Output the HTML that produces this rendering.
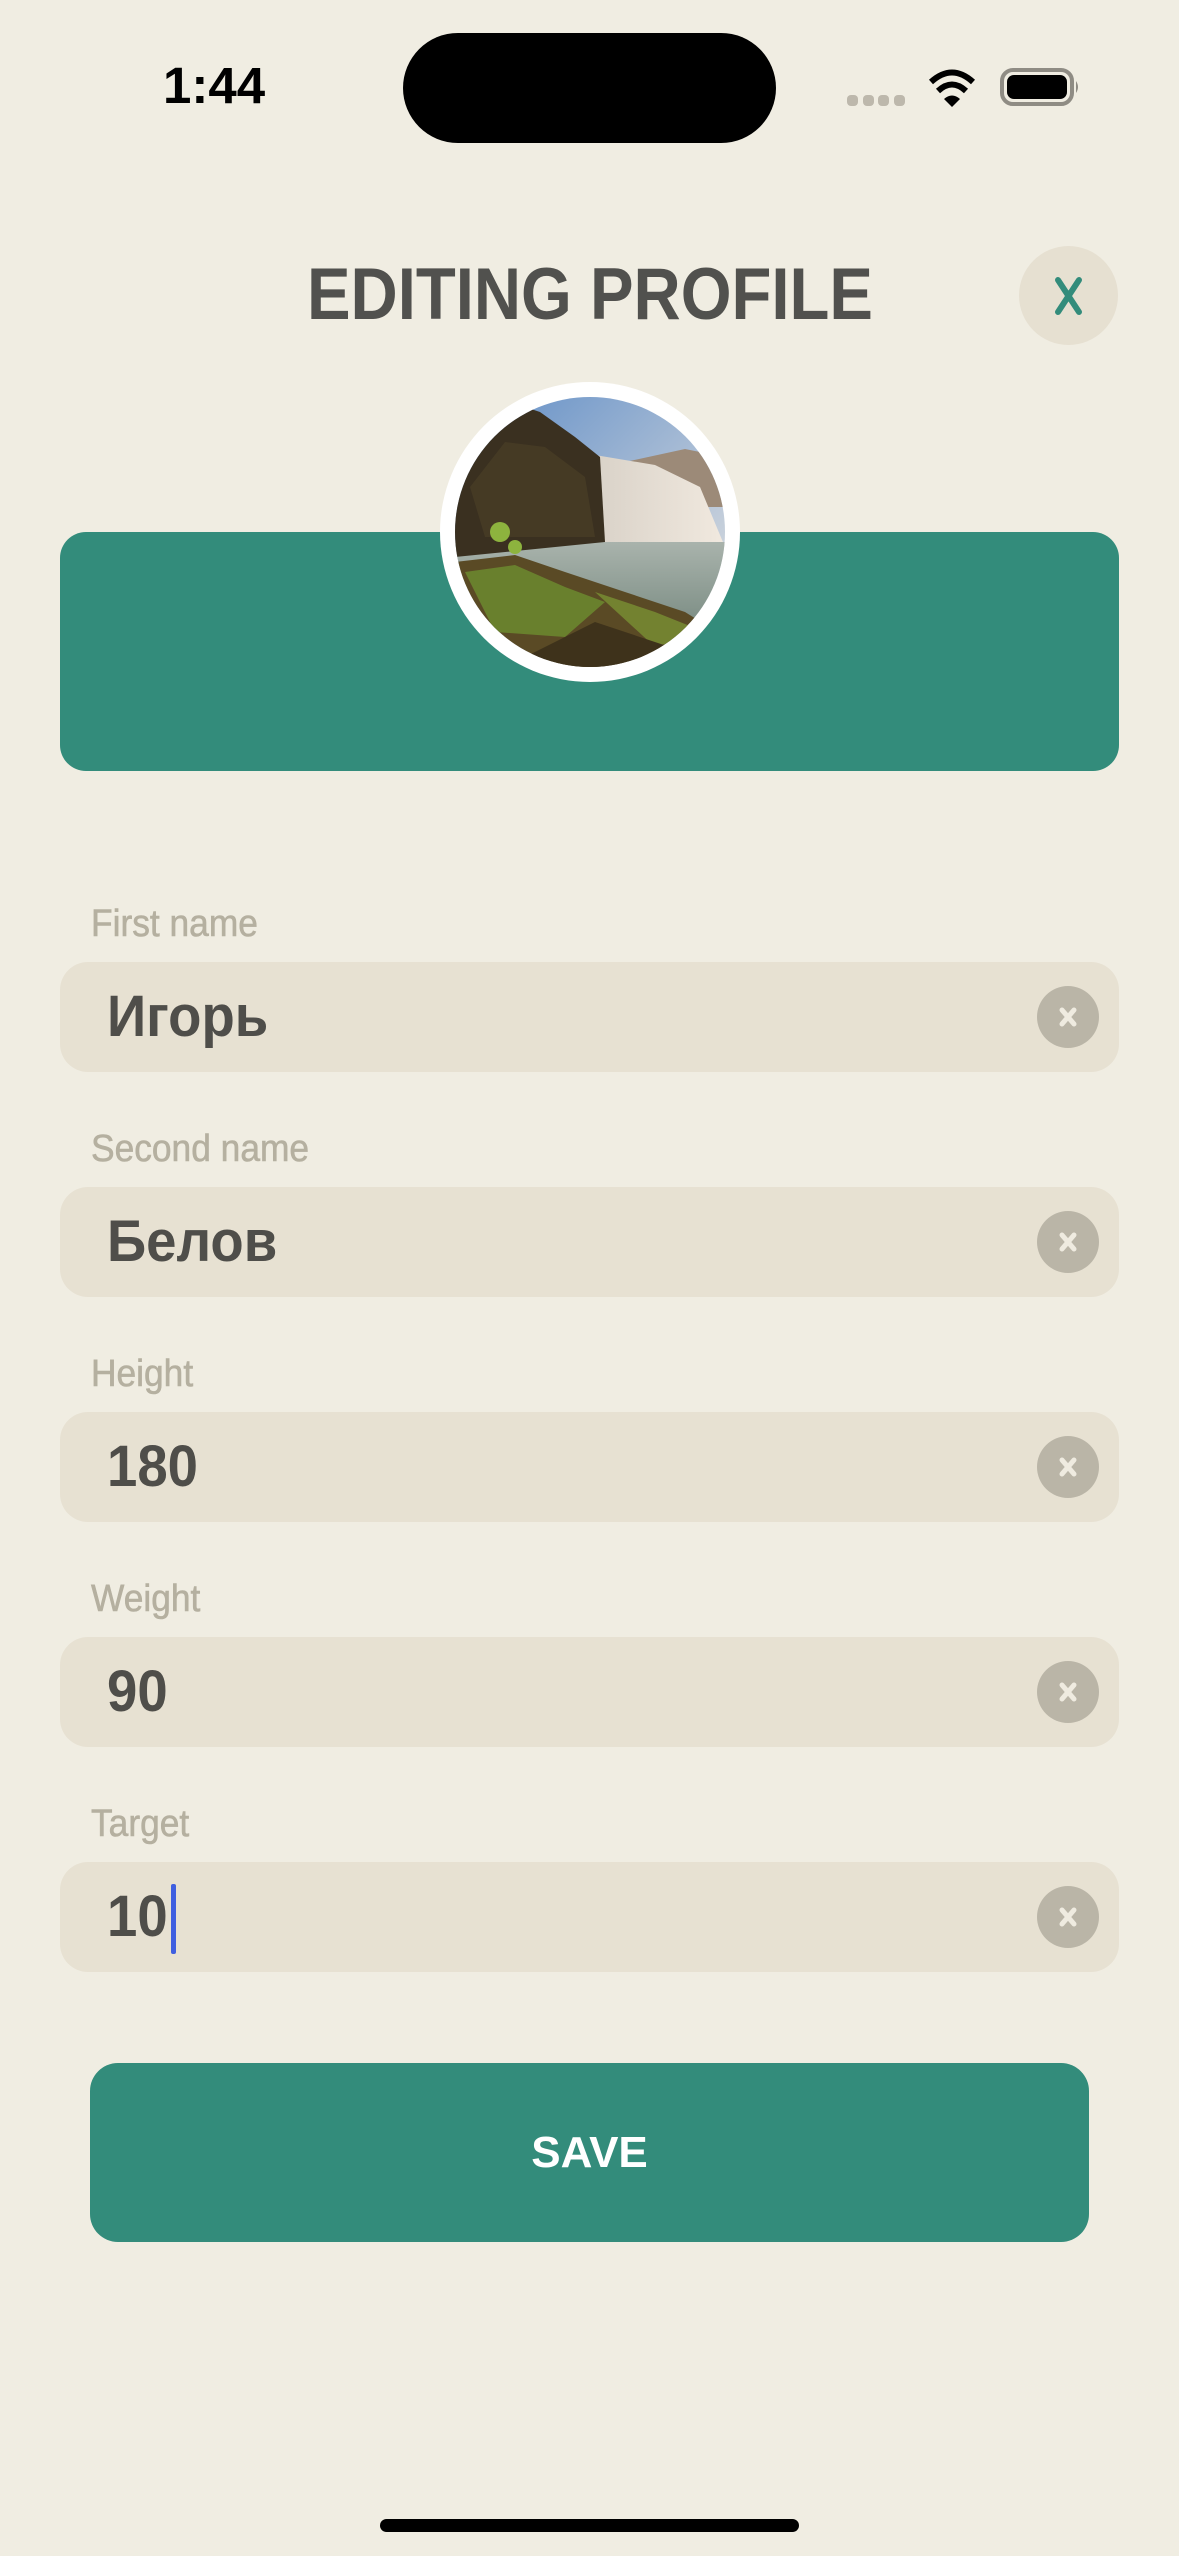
<!DOCTYPE html>
<html><head><meta charset="utf-8"><style>
html,body{margin:0;padding:0}
body{width:1179px;height:2556px;background:#F0EDE2;position:relative;overflow:hidden;font-family:"Liberation Sans",sans-serif}
.abs{position:absolute}
.lbl{position:absolute;left:91px;font-size:38px;color:#B5B0A0;transform:scaleX(0.93);transform-origin:left center;line-height:1;-webkit-text-stroke:0.6px #B5B0A0}
.fld{position:absolute;left:60px;width:1059px;height:110px;background:#E7E1D2;border-radius:28px}
.val{position:absolute;left:47px;top:0;line-height:110px;font-size:58px;font-weight:bold;color:#4F4E4A;transform:scaleX(0.94);transform-origin:left center}
.clr{position:absolute;left:977px;top:24px;width:62px;height:62px;border-radius:50%;background:#BAB5A7}
</style></head><body>
<div class="abs" style="left:163px;top:56px;font-size:51px;font-weight:bold;color:#000">1:44</div>
<div class="abs" style="left:403px;top:33px;width:373px;height:110px;border-radius:55px;background:#000"></div>
<svg class="abs" style="left:840px;top:60px" width="250" height="60">
<g fill="#BDB8AC"><rect x="7" y="35" width="11" height="11" rx="4"/><rect x="23" y="35" width="11" height="11" rx="4"/><rect x="38" y="35" width="11" height="11" rx="4"/><rect x="54" y="35" width="11" height="11" rx="4"/></g>
<g fill="none" stroke="#000" stroke-width="6"><path d="M91 22 Q112 3 133 22"/><path d="M98 31 Q112 18 126 31"/></g>
<path d="M104 39 Q112 32 120 39 L112 47Z" fill="#000"/>
<rect x="162" y="10" width="70" height="34" rx="11" fill="none" stroke="#8F8C84" stroke-width="4"/>
<rect x="167" y="15" width="60" height="24" rx="7" fill="#000"/>
<path d="M236 21 Q240 27 236 33Z" fill="#8F8C84"/>
</svg>
<svg class="abs" style="left:300px;top:255px" width="580" height="75"><text x="7" y="64" textLength="566" lengthAdjust="spacingAndGlyphs" font-family="Liberation Sans" font-weight="bold" font-size="73" fill="#51514E">EDITING PROFILE</text></svg>
<div class="abs" style="left:1019px;top:246px;width:99px;height:99px;border-radius:50%;background:#E6E0D1"></div>
<svg class="abs" style="left:1019px;top:246px" width="99" height="99"><path d="M39 34 L60 66 M60 34 L39 66" stroke="#338C7B" stroke-width="6" stroke-linecap="round"/></svg>
<div class="abs" style="left:60px;top:532px;width:1059px;height:239px;background:#338C7B;border-radius:26px"></div>
<div class="abs" style="left:440px;top:382px;width:300px;height:300px;border-radius:50%;background:#fff"></div>
<svg class="abs" style="left:455px;top:397px" width="270" height="270">
<defs><clipPath id="c"><circle cx="135" cy="135" r="135"/></clipPath>
<linearGradient id="sky" x1="0" y1="0" x2="1" y2="1"><stop offset="0" stop-color="#5E8CC6"/><stop offset="1" stop-color="#E9E6E2"/></linearGradient>
<linearGradient id="wf" x1="0" y1="0" x2="1" y2="0"><stop offset="0" stop-color="#D9D2C8"/><stop offset="1" stop-color="#F1E9DF"/></linearGradient>
<linearGradient id="wat" x1="0" y1="0" x2="0" y2="1"><stop offset="0" stop-color="#A9B3AC"/><stop offset="1" stop-color="#7E8F86"/></linearGradient></defs>
<g clip-path="url(#c)">
<rect width="270" height="270" fill="url(#sky)"/>
<path d="M170 65 L230 52 L270 60 L270 110 L170 110Z" fill="#9C8A78"/>
<path d="M140 58 L200 68 L245 90 L270 150 L150 150Z" fill="url(#wf)"/>
<rect x="0" y="145" width="270" height="80" fill="url(#wat)"/>
<path d="M0 60 L30 20 L55 5 L85 15 L120 40 L145 60 L150 145 L0 160Z" fill="#3A3020"/>
<path d="M15 90 L50 45 L90 50 L130 80 L140 140 L30 140Z" fill="#4A3F26" opacity="0.7"/>
<path d="M0 165 L60 158 L110 175 L170 195 L230 215 L270 240 L270 270 L0 270Z" fill="#5A4A25"/>
<path d="M10 175 L60 168 L110 190 L150 205 L110 240 L40 235Z" fill="#6C8A2F" opacity="0.85"/>
<path d="M140 195 L200 215 L250 235 L200 250Z" fill="#7E9A35" opacity="0.7"/>
<path d="M50 270 L140 225 L230 255 L230 270Z" fill="#3E321B"/>
<circle cx="45" cy="135" r="10" fill="#8DB33E"/><circle cx="60" cy="150" r="7" fill="#8DB33E"/>
</g></svg>

<div class="lbl" style="top:905px">First name</div>
<div class="fld" style="top:962px"><div class="val">Игорь</div><div class="clr"></div><svg class="abs" style="left:977px;top:24px" width="62" height="62"><path d="M25 24 L37 38 M37 24 L25 38" stroke="#EFEBE0" stroke-width="5" stroke-linecap="round"/></svg></div>
<div class="lbl" style="top:1130px">Second name</div>
<div class="fld" style="top:1187px"><div class="val">Белов</div><div class="clr"></div><svg class="abs" style="left:977px;top:24px" width="62" height="62"><path d="M25 24 L37 38 M37 24 L25 38" stroke="#EFEBE0" stroke-width="5" stroke-linecap="round"/></svg></div>
<div class="lbl" style="top:1355px">Height</div>
<div class="fld" style="top:1412px"><div class="val">180</div><div class="clr"></div><svg class="abs" style="left:977px;top:24px" width="62" height="62"><path d="M25 24 L37 38 M37 24 L25 38" stroke="#EFEBE0" stroke-width="5" stroke-linecap="round"/></svg></div>
<div class="lbl" style="top:1580px">Weight</div>
<div class="fld" style="top:1637px"><div class="val">90</div><div class="clr"></div><svg class="abs" style="left:977px;top:24px" width="62" height="62"><path d="M25 24 L37 38 M37 24 L25 38" stroke="#EFEBE0" stroke-width="5" stroke-linecap="round"/></svg></div>
<div class="lbl" style="top:1805px">Target</div>
<div class="fld" style="top:1862px"><div class="val">10</div><div class="abs" style="left:111px;top:22px;width:5px;height:70px;background:#3F5FE0;border-radius:2px"></div><div class="clr"></div><svg class="abs" style="left:977px;top:24px" width="62" height="62"><path d="M25 24 L37 38 M37 24 L25 38" stroke="#EFEBE0" stroke-width="5" stroke-linecap="round"/></svg></div>

<div class="abs" style="left:90px;top:2063px;width:999px;height:179px;background:#338C7B;border-radius:28px;color:#fff;font-weight:bold;font-size:44px;text-align:center;line-height:179px">SAVE</div>
<div class="abs" style="left:380px;top:2519px;width:419px;height:13px;background:#000;border-radius:7px"></div>
</body></html>
